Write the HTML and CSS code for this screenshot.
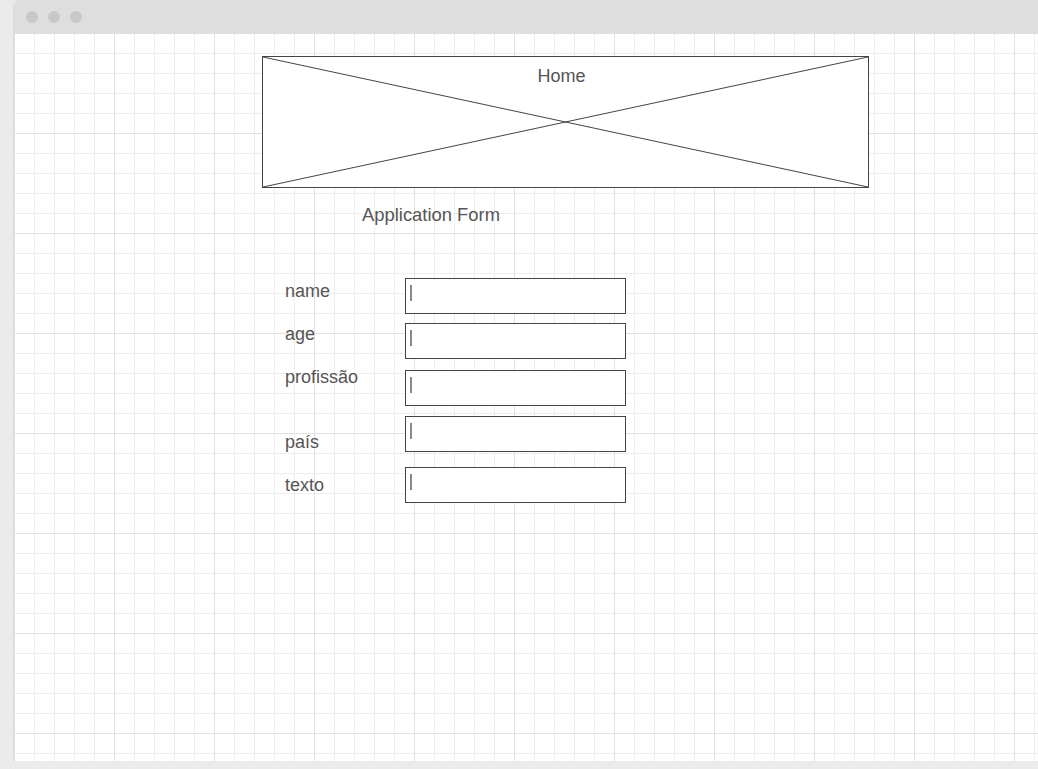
FILE: index.html
```html
<!DOCTYPE html>
<html lang="pt">
<head>
<meta charset="utf-8">
<title>Application Form</title>
<link rel="stylesheet" href="styles.css">
</head>
<body>
<div class="window">
  <div class="titlebar">
    <span class="dot"></span>
    <span class="dot"></span>
    <span class="dot"></span>
  </div>
  <div class="canvas">
    <div class="hero">
      <svg class="hero-x" viewBox="0 0 100 100" preserveAspectRatio="none" aria-hidden="true">
        <line x1="0" y1="0" x2="100" y2="100" vector-effect="non-scaling-stroke"/>
        <line x1="100" y1="0" x2="0" y2="100" vector-effect="non-scaling-stroke"/>
      </svg>
      <div class="hero-title">Home</div>
    </div>
    <div class="form-title">Application Form</div>
    <div class="form">
      <div class="labels">
        <div class="label">name</div>
        <div class="label label-age">age</div>
        <div class="label label-prof">profissão</div>
        <div class="label label-pais">país</div>
        <div class="label label-texto">texto</div>
      </div>
      <div class="fields">
        <div class="field"><span class="caret"></span></div>
        <div class="field field-age"><span class="caret"></span></div>
        <div class="field field-prof"><span class="caret"></span></div>
        <div class="field field-pais"><span class="caret"></span></div>
        <div class="field field-texto"><span class="caret"></span></div>
      </div>
    </div>
  </div>
</div>
</body>
</html>
```
FILE: styles.css
```css
html, body {
  margin: 0;
  height: 100%;
}
body {
  background: #ebebeb;
  font-family: "Liberation Sans", Arial, sans-serif;
  font-size: 18px;
  color: #555;
  overflow: hidden;
}
.window {
  margin-left: 13px;
  width: 1040px;
  height: 761px;
  border-left: 1px solid #d9d9d9;
  border-top-left-radius: 6px;
  overflow: hidden;
  display: flex;
  flex-direction: column;
  background: #fff;
}
.titlebar {
  height: 33px;
  flex: none;
  background: #dedede;
  display: flex;
  align-items: center;
  gap: 10px;
  padding-left: 12px;
}
.dot {
  width: 12px;
  height: 12px;
  border-radius: 50%;
  background: #c8c8c8;
}
.canvas {
  flex: 1;
  background-color: #fff;
  background-image:
    linear-gradient(to right, #e1e1e1 1px, transparent 1px),
    linear-gradient(to bottom, #e1e1e1 1px, transparent 1px),
    linear-gradient(to right, #eeeeee 1px, transparent 1px),
    linear-gradient(to bottom, #eeeeee 1px, transparent 1px);
  background-size: 100px 100px, 100px 100px, 20px 20px, 20px 20px;
  padding: 23px 0 0 248px;
}
.hero {
  position: relative;
  width: 607px;
  height: 132px;
  box-sizing: border-box;
  border: 1px solid #444;
  background: #fff;
}
.hero-x {
  position: absolute;
  inset: 0;
  width: 100%;
  height: 100%;
}
.hero-x line {
  stroke: #444;
  stroke-width: 1;
}
.hero-title {
  position: relative;
  padding-top: 10px;
  padding-right: 8px;
  text-align: center;
  line-height: 18px;
}
.form-title {
  margin: 18px 0 0 100px;
  font-size: 18.4px;
  line-height: 18px;
}
.form {
  display: flex;
  margin-top: 54px;
}
.labels {
  width: 120px;
  margin-left: 23px;
  padding-top: 4px;
  display: flex;
  flex-direction: column;
}
.label {
  line-height: 18px;
}
.label-age, .label-prof, .label-texto { margin-top: 25px; }
.label-pais { margin-top: 47px; }
.fields {
  display: flex;
  flex-direction: column;
}
.field {
  width: 221px;
  height: 36px;
  box-sizing: border-box;
  border: 1px solid #444;
  background: #fff;
  padding: 6px 0 0 4px;
}
.field-age { margin-top: 9px; }
.field-prof { margin-top: 11px; }
.field-pais { margin-top: 10px; }
.field-texto { margin-top: 15px; }
.caret {
  display: block;
  width: 2px;
  height: 16px;
  background: #8a8a8a;
}
```
